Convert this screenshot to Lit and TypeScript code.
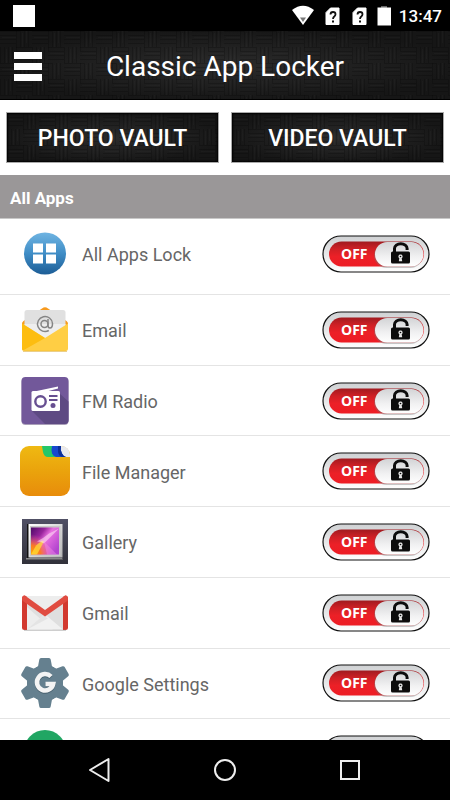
import { LitElement, html, svg, css, unsafeCSS, nothing, TemplateResult } from "lit";
import { customElement, property } from "lit/decorators.js";

const weave = unsafeCSS(
  "url(\"data:image/svg+xml," +
    encodeURIComponent(
      `<svg xmlns="http://www.w3.org/2000/svg" width="32" height="32"><g fill="none" stroke="#000" stroke-opacity=".2"><path d="M0 4.5h16M0 8.5h16M0 12.5h16M16 20.5h16M16 24.5h16M16 28.5h16M20.5 0v16M24.5 0v16M28.5 0v16M4.5 16v16M8.5 16v16M12.5 16v16M0 .5h20M16 16.5h16M16.5 0v20M.5 16v16"/></g><g stroke="#fff" stroke-opacity=".02"><path d="M2 6.5h14M18 22.5h14M22.5 2v14M6.5 18v14M26.5 0v12M10.5 16v12"/></g></svg>`
    ) +
    "\")"
);

const icons: Record<string, TemplateResult> = {
  apps: svg`
    <defs><linearGradient id="g" x2="0" y2="1"><stop stop-color="#6fb4e2"/><stop offset=".5" stop-color="#3f8dc6"/><stop offset="1" stop-color="#1c5d96"/></linearGradient></defs>
    <circle cx="25" cy="24.500" r="21" fill="url(#g)"/>
    <path d="M13 14.500h10v9H13zM26 14.500h10v9H26zM13 25.500h10v9H13zM26 25.500h10v9H26z" fill="#fff"/>`,
  email: svg`
    <path d="M2 18.500Q2 17 3.500 16L22 3.500Q25 1 28 3.500L46.500 16Q48 17 48 18.500V24H2z" fill="#f79a1e"/>
    <path d="M4.500 7.500q0-2.500 2.500-2.500h36q2.500 0 2.500 2.500v18L25 39 4.500 26z" fill="#e0e0e0"/>
    <path d="M4.500 19h41v7L25 39 4.500 26z" fill="#eee"/>
    <path d="M28 14v6.500q0 2.500 2 2.500 2.500 0 2.500-4.500a7.500 7.500 0 1 0-3.700 7" fill="none" stroke="#858585" stroke-width="1.500"/>
    <circle cx="24.500" cy="19" r="3.500" fill="none" stroke="#858585" stroke-width="1.500"/>
    <path d="M2 18.500L25 33l23-14.500V43.500q0 2.500-2.500 2.500h-41Q2 46 2 43.500z" fill="#ffce44"/>
    <path d="M2 18.500L25 33 3 45.500Q2 45 2 43.500z" fill="#fdbd10"/>
    <path d="M3 46.300h44" stroke="#dba92d" stroke-width=".7"/>`,
  radio: svg`
    <rect x="1.500" y="2" width="47" height="47" rx="4" fill="#a99fb8"/>
    <rect x="1.500" y="1" width="47" height="47" rx="4" fill="#72589a"/>
    <path d="M39 17l9.500 8.500V44q0 4-4 4H25L12 35z" fill="#5e4a83"/>
    <path d="M12 16L38 10.500v2L23 16.500z" fill="#fff"/>
    <rect x="11.500" y="15" width="28.500" height="20" rx="1.500" fill="#fff"/>
    <circle cx="20.500" cy="25.500" r="5.200" fill="none" stroke="#674f91" stroke-width="2.400"/>
    <path d="M29 20h8.500M29 24h8.500" stroke="#674f91" stroke-width="1.800"/><circle cx="33" cy="29.500" r="2.500" fill="#674f91"/>`,
  files: svg`
    <defs><linearGradient id="g" x2="0" y2="1"><stop stop-color="#efb912"/><stop offset=".5" stop-color="#eaa30c"/><stop offset="1" stop-color="#e88c0b"/></linearGradient></defs>
    <rect width="50" height="50" rx="9" fill="url(#g)"/>
    <path d="M40 0h1q8 0 9 8.500V11h-5q-4 0-5-5z" fill="#e9e9ed"/>
    <path d="M31 0h10q-1 4 1 7.500 1.500 3 4 3.500H36q-4 0-5-5z" fill="#1748ce"/><path d="M38 0h3q-1 4 1 7.500 1.500 3 4 3.500h-3q-4 0-5-5z" fill="#0b2f98"/>
    <path d="M22 0h10q-1 4 0 7.500 1.500 3 4 3.500h-8q-4 0-5-5z" fill="#24c769"/>`,
  gallery: svg`
    <defs><linearGradient id="g" x2="0" y2="1"><stop stop-color="#505065"/><stop offset="1" stop-color="#31313a"/></linearGradient>
    <linearGradient id="f" x2="1" y2="1"><stop stop-color="#fff"/><stop offset="1" stop-color="#b4b4b4"/></linearGradient>
    <linearGradient id="p" x2="1" y2=".7"><stop stop-color="#4c0a66"/><stop offset=".35" stop-color="#99259d"/><stop offset=".55" stop-color="#ea71e1"/><stop offset="1" stop-color="#b345cf"/></linearGradient>
    <radialGradient id="y" cx="0" cy="1" r=".75"><stop stop-color="#ffb000"/><stop offset=".45" stop-color="#fb7a22"/><stop offset="1" stop-color="#ee53a6" stop-opacity="0"/></radialGradient></defs>
    <rect x="2" y="2" width="46" height="45" fill="url(#g)"/>
    <path d="M6 41h36l1 1.500H6z" fill="#888"/><path d="M7 7h3v34H7z" fill="#111"/>
    <rect x="8.500" y="7" width="34" height="33.500" fill="url(#f)"/>
    <rect x="10" y="9" width="30.500" height="30" fill="#c8c8c8"/>
    <rect x="11" y="10.500" width="28" height="27" fill="url(#p)"/>
    <rect x="11" y="10.500" width="28" height="27" fill="url(#y)"/>
    <path d="M11 37.500l5-9 6-5 2 1-7 13z" fill="#ffdc35" opacity=".75"/>
    <path d="M17 24.500q6-3 12-8l10-5-13 13-2 2q-3-2-7-2z" fill="#ffe7f5" opacity=".55"/><path d="M24 24.500l13 13H27z" fill="#f794e8" opacity=".4"/>`,
  gmail: svg`
    <path d="M5 8h40v34H5z" fill="#ededed"/>
    <path d="M7 13l18 16 18-16v29H33L7 19z" fill="#dfdfdf"/>
    <path d="M7 41.500l16-14 2 1.500 2-1 16 13.500z" fill="#f1f1f1"/><path d="M7 41.500l16-14 5 3z" fill="#e4e4e4"/>
    <path d="M2 10.500Q2 7.500 5 7.500L7 9V42H4.500Q2 42 2 39.500zM48 10.500q0-3-3-3L43 9V42h2.500Q48 42 48 39.500z" fill="#d2392f"/>
    <path d="M2 11Q2 7.500 4.500 7.500L7 9l18 13L43 9l2.500-1.500Q48 7.500 48 11q0 1.500-1.500 2.500L25 28.500 3.500 13.500Q2 12.500 2 11z" fill="#e04c41"/>
    <path d="M4 42.300h42" stroke="#999" stroke-width=".6"/>`,
  settings: svg`
    <g fill="#65808f"><circle cx="25" cy="25" r="18"/>
    ${[0, 60, 120, 180, 240, 300].map(
      (a) => svg`<path d="M14 11l4-2.500 1.300-7q.3-1.500 1.700-1.500h8q1.400 0 1.700 1.500L32 8.500l4 2.500z" transform="rotate(${a} 25 25)"/>`
    )}</g>
    <path d="M31 18.500a8.200 8.200 0 1 0 2.200 7.500H25.500" transform="translate(0 1)" fill="none" stroke="#4a6270" stroke-width="4.500"/>
    <path d="M31 18.500a8.200 8.200 0 1 0 2.200 7.500H25.500" fill="none" stroke="#f4f4f4" stroke-width="4.500"/>`,
  green: svg`<circle cx="25" cy="22" r="21" fill="#21a663"/>`,
};

@customElement("app-icon")
export class AppIcon extends LitElement {
  static styles = css`
    :host { display: block; width: 50px; height: 50px; flex: none; }
    .art { display: block; width: 100%; height: 100%; }
  `;
  @property() name = "apps";
  render() {
    return html`<svg class="art" viewBox="0 0 50 50" aria-hidden="true">${icons[this.name]}</svg>`;
  }
}

@customElement("lock-toggle")
export class LockToggle extends LitElement {
  static styles = css`
    :host { display: block; flex: none; }
    .toggle { display: block; position: relative; width: 108px; height: 38px; cursor: pointer; }
    .box { position: absolute; inset: 0; width: 100%; height: 100%; margin: 0; opacity: 0; cursor: pointer; }
    .art { display: block; width: 100%; height: 100%; }
    .state { font: 700 14px "Open Sans", "Noto Sans", sans-serif; fill: #fff; }
    .box:focus-visible + .art { outline: 2px solid #3f8dc6; }
  `;
  @property() label = "";
  render() {
    return html`<label class="toggle">
      <input class="box" type="checkbox" role="switch" aria-label=${"Lock " + this.label} />
      <svg class="art" viewBox="0 0 108 38" aria-hidden="true">
        <defs>
          <linearGradient id="rim" x2="0" y2="1"><stop stop-color="#cfd1d3" /><stop offset=".5" stop-color="#e6e7e8" /><stop offset="1" stop-color="#fff" /></linearGradient>
          <linearGradient id="red" x2="0" y2="1"><stop stop-color="#a01b20" /><stop offset=".3" stop-color="#cf2025" /><stop offset=".6" stop-color="#ec2027" /><stop offset="1" stop-color="#ed1c24" /></linearGradient>
          <linearGradient id="knob" x2="0" y2="1"><stop stop-color="#d3d4d6" /><stop offset=".6" stop-color="#f1f1f2" /><stop offset="1" stop-color="#fff" /></linearGradient>
        </defs>
        <rect x="1" y="1" width="106" height="36" rx="18" fill="url(#rim)" stroke="#111" stroke-width="1.200" />
        <rect x="7" y="6.500" width="95" height="25" rx="12.500" fill="url(#red)" />
        <rect x="52" y="8" width="49" height="25" rx="12.500" fill="#777" opacity=".4" />
        <rect x="53" y="7" width="48.500" height="24.500" rx="12.250" fill="url(#knob)" />
        ${this.label ? svg`<text class="state" x="19" y="24">OFF</text>` : nothing}
        <path d="M72.500 17v-3.500a6.300 4.800 0 0 1 12.600 0v1.500" fill="none" stroke="#0c0c0c" stroke-width="3" />
        <rect x="69" y="16.500" width="19" height="12" rx="1.500" fill="#0c0c0c" />
        <path d="M78.500 19.500a2 2 0 0 1 1.200 3.700l.5 3h-3.400l.5-3A2 2 0 0 1 78.500 19.500z" fill="#e6e6e6" /><circle cx="78.500" cy="21.500" r=".8" fill="#0c0c0c" />
      </svg>
    </label>`;
  }
}

const apps = [
  ["email", "Email"],
  ["radio", "FM Radio"],
  ["files", "File Manager"],
  ["gallery", "Gallery"],
  ["gmail", "Gmail"],
  ["settings", "Google Settings"],
  ["green", ""],
];

@customElement("app-root")
export class AppRoot extends LitElement {
  static styles = css`
    :host { display: flex; flex-direction: column; height: 100vh; overflow: hidden; background: #fff; font-family: Roboto, sans-serif; }
    .status { display: flex; align-items: center; flex: none; height: 31px; padding: 0 8px 0 13px; background: #000; color: #fff; }
    .notice { width: 22px; height: 22px; margin-right: auto; background: #fff; }
    .glyphs { display: block; width: 100px; height: 22px; margin-right: 7px; }
    .clock { padding-top: 2px; font-size: 17px; font-weight: 500; line-height: 29px; }
    .weave { background: ${weave}, radial-gradient(ellipse at center, #2b2b2b, #161616 75%); }
    .header { display: grid; grid-template-columns: 56px 1fr 56px; align-items: center; flex: none; height: 69px; box-sizing: border-box; border-bottom: 1px solid #000; }
    .menu { display: grid; gap: 4px; width: 28px; margin: 2px 0 0 14px; padding: 0; border: 0; background: none; cursor: pointer; }
    .bar { height: 7px; background: #fff; }
    .title { margin: 4px 0 0; color: #fff; font-size: 28px; font-weight: 400; line-height: 36px; text-align: center; }
    .vaults { display: grid; grid-template-columns: 1fr 1fr; gap: 12px; flex: none; padding: 12px 6px; }
    .vault { height: 51px; padding: 2px 0 0; border: 1px solid #aaa; color: #fff; font: 500 23px Roboto, sans-serif; box-shadow: inset 0 0 2px 1px #000; cursor: pointer; }
    .section { flex: none; margin: 0; padding: 2px 10px 0; background: #9a9798; color: #fff; font-size: 17px; font-weight: 700; line-height: 42px; border-bottom: 1px solid #c8c8c8; box-sizing: border-box; height: 44px; }
    .scroll { flex: 1; min-height: 0; overflow: hidden; }
    .list { display: grid; grid-auto-rows: 1fr; min-height: 495px; margin: 0; padding: 0; list-style: none; }
    .row { display: flex; align-items: center; box-sizing: border-box; padding: 0 20px; border-bottom: 1px solid #e4e4e4; }
    .all { height: 76px; padding-bottom: 6px; }
    .name { flex: 1; padding: 3px 0 0 12px; color: #666; font-size: 18px; line-height: 24px; }
    .nav { display: grid; grid-template-columns: 1fr 1fr 1fr; flex: none; height: 60px; padding: 0 37px; background: #000; }
    .key { display: grid; place-items: center; padding: 0; border: 0; background: none; cursor: pointer; }
    .shape { display: block; width: 28px; height: 28px; fill: none; stroke: #eee; stroke-width: 2; }
  `;

  render() {
    return html`
      <div class="status">
        <span class="notice"></span>
        <svg class="glyphs" viewBox="0 0 100 22" aria-hidden="true">
          <path d="M0 5q11-8.500 22 0L11 20z" fill="#fff" /><path d="M8 12.500h6L11 17z" fill="#777" />
          ${[34, 61].map(
            (x) => svg`<g transform="translate(${x} 3)"><path d="M4.500 0H13v16.500H0V4.500z" fill="#fff" stroke="#fff" stroke-linejoin="round"/><path d="M4.500 6.500q0-2.500 2.500-2.500t2.500 2.300q0 1.300-1.200 2.200T7 11" fill="none" stroke="#111" stroke-width="1.800"/><path d="M6 12.500h2v2H6z" fill="#111"/></g>`
          )}
          <path d="M89 1h6v3h-6z" fill="#666" /><path d="M85.500 2.500H99v18H85.500z" fill="#fff" />
        </svg>
        <time class="clock">13:47</time>
      </div>
      <header class="header weave">
        <button class="menu" aria-label="Menu"><span class="bar"></span><span class="bar"></span><span class="bar"></span></button>
        <h1 class="title">Classic App Locker</h1>
      </header>
      <div class="vaults">
        <button class="vault weave">PHOTO VAULT</button>
        <button class="vault weave">VIDEO VAULT</button>
      </div>
      <h2 class="section">All Apps</h2>
      <main class="scroll">
        <div class="row all">
          <app-icon name="apps"></app-icon><span class="name">All Apps Lock</span><lock-toggle label="All Apps"></lock-toggle>
        </div>
        <ul class="list">
          ${apps.map(
            ([icon, name]) => html`<li class="row"><app-icon name=${icon}></app-icon><span class="name">${name}</span><lock-toggle label=${name}></lock-toggle></li>`
          )}
        </ul>
      </main>
      <nav class="nav">
        <button class="key" aria-label="Back"><svg class="shape" viewBox="0 0 28 28"><path d="M22.500 3v22L4 14z" stroke-linejoin="round" /></svg></button>
        <button class="key" aria-label="Home"><svg class="shape" viewBox="0 0 28 28"><circle cx="14" cy="14" r="10" /></svg></button>
        <button class="key" aria-label="Recent apps"><svg class="shape" viewBox="0 0 28 28"><rect x="5" y="5" width="18" height="18" /></svg></button>
      </nav>
    `;
  }
}
